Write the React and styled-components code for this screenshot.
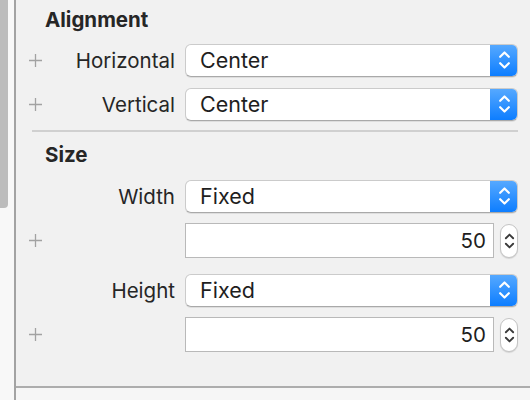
import React from 'react'
import styled, { createGlobalStyle } from 'styled-components'

const Global = createGlobalStyle`
    html, body { margin: 0; padding: 0; }
    body {
        width: 530px;
        height: 400px;
        overflow: hidden;
        background: #f6f6f6;
        font-family: Inter, "Noto Sans", sans-serif;
        color: #262626;
    }
`

const Window = styled.div`
    display: flex;
    width: 530px;
    height: 400px;
`
const Gutter = styled.div`
    width: 14px;
    background: #f8f8f8;
`
const Thumb = styled.div`
    width: 8px;
    height: 208px;
    background: #bcbcbc;
    border-bottom-right-radius: 4px;
`
const Inspector = styled.div`
    flex: 1;
    display: flex;
    flex-direction: column;
    border-left: 2px solid #a3a3a3;
`
const Panel = styled.div`
    height: 388px;
    background: #f1f1f1;
    border-bottom: 2px solid #adadad;
    box-sizing: border-box;
    padding-top: 8px;
`
const Heading = styled.div`
    font-weight: 700;
    font-size: 20.5px;
    line-height: 24px;
    padding-left: 29px;
    margin-top: ${p => p.top || 0}px;
    margin-bottom: ${p => p.gap}px;
`
const Row = styled.div`
    display: flex;
    align-items: center;
    height: ${p => p.h || 34}px;
    margin-bottom: ${p => p.gap || 0}px;
`
const Plus = styled.div`
    width: 15px;
    margin-left: 12px;
    display: flex;
    justify-content: center;
    svg { display: block; }
`
const Label = styled.div`
    width: 132px;
    text-align: right;
    font-size: 20.5px;
    padding-right: 10px;
    white-space: nowrap;
`
const Popup = styled.div`
    width: 333px;
    height: 33px;
    box-sizing: border-box;
    display: flex;
    border: 1px solid #cbcbcb;
    border-bottom-color: #a9a9a9;
    border-radius: 6px;
    background: #fff;
    box-shadow: 0 1px 0 rgba(0, 0, 0, 0.08);
    overflow: hidden;
`
const PopupText = styled.div`
    flex: 1;
    display: flex;
    align-items: center;
    padding-left: 14px;
    font-size: 21.5px;
    color: #1e1e1e;
`
const Arrows = styled.div`
    width: 28px;
    display: flex;
    align-items: center;
    justify-content: center;
    background: linear-gradient(#58aaff, #0b7cff);
    margin: -1px -1px -1px 0;
`
const Field = styled.div`
    width: 309px;
    height: 35px;
    box-sizing: border-box;
    border: 1px solid #b9b9b9;
    background: #fff;
    display: flex;
    align-items: center;
    justify-content: flex-end;
    padding-right: 7px;
    font-size: 20.5px;
    color: #1e1e1e;
`
const Stepper = styled.div`
    width: 18px;
    height: 34px;
    margin-left: 6px;
    box-sizing: border-box;
    border: 1px solid #c4c4c4;
    border-radius: 9px;
    background: #fff;
    box-shadow: 0 1px 1px rgba(0, 0, 0, 0.12);
    display: flex;
    align-items: center;
    justify-content: center;
`
const Rule = styled.div`
    height: 2px;
    background: #d0d0d0;
    margin: 9px 12px 0 16px;
`

function PlusIcon() {
    return (
        <svg width="15" height="15" viewBox="0 0 15 15">
            <path d="M7.5 1v13M1 7.5h13" stroke="#a2a2a2" strokeWidth="1.3" />
        </svg>
    )
}

function Chevrons({ color, w, h }) {
    return (
        <svg width={w} height={h} viewBox="0 0 12 22" fill="none">
            <path d="M2 8l4-4 4 4M2 14l4 4 4-4" stroke={color} strokeWidth="2" strokeLinecap="round" strokeLinejoin="round" />
        </svg>
    )
}

function PopupRow({ plus, label, value, gap }) {
    return (
        <Row gap={gap}>
            <Plus>{plus && <PlusIcon />}</Plus>
            <Label>{label}</Label>
            <Popup>
                <PopupText>{value}</PopupText>
                <Arrows><Chevrons color="#fff" w={13} h={24} /></Arrows>
            </Popup>
        </Row>
    )
}

function NumberRow({ value, gap }) {
    return (
        <Row h={35} gap={gap}>
            <Plus><PlusIcon /></Plus>
            <Label />
            <Field>{value}</Field>
            <Stepper><Chevrons color="#3a3a3a" w={11} h={22} /></Stepper>
        </Row>
    )
}

export default function App() {
    return (
        <Window>
            <Global />
            <Gutter><Thumb /></Gutter>
            <Inspector>
                <Panel>
                    <Heading gap={11}>Alignment</Heading>
                    <PopupRow plus label="Horizontal" value="Center" gap={10} />
                    <PopupRow plus label="Vertical" value="Center" />
                    <Rule />
                    <Heading top={11} gap={12}>Size</Heading>
                    <PopupRow label="Width" value="Fixed" gap={10} />
                    <NumberRow value="50" gap={15} />
                    <PopupRow label="Height" value="Fixed" gap={10} />
                    <NumberRow value="50" />
                </Panel>
            </Inspector>
        </Window>
    )
}
